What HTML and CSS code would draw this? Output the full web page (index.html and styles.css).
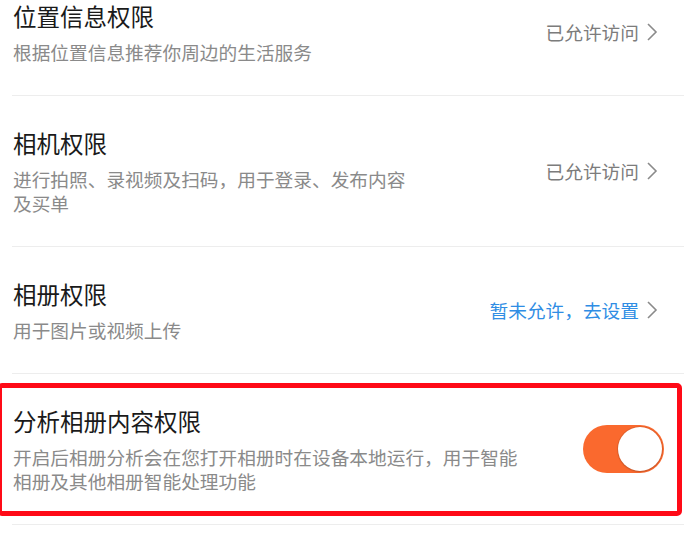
FILE: index.html
```html
<!DOCTYPE html>
<html lang="zh-CN">
<head>
    <meta charset="UTF-8">
    <meta name="viewport" content="width=device-width, initial-scale=1.0">
    <title>权限设置</title>
    <link rel="stylesheet" href="styles.css">
</head>
<body>

    <ul class="perm-list">
        <li class="perm-row">
            <div class="perm-text">
                <div class="perm-title">位置信息权限</div>
                <div class="perm-desc">根据位置信息推荐你周边的生活服务</div>
            </div>
            <a class="perm-state" href="#">
                已允许访问
                <svg class="chevron" width="12" height="20" viewBox="0 0 12 20"><polyline points="2,2 10,10 2,18"/></svg>
            </a>
        </li>
        <li class="perm-row">
            <div class="perm-text">
                <div class="perm-title">相机权限</div>
                <div class="perm-desc">进行拍照、录视频及扫码，用于登录、发布内容及买单</div>
            </div>
            <a class="perm-state" href="#">
                已允许访问
                <svg class="chevron" width="12" height="20" viewBox="0 0 12 20"><polyline points="2,2 10,10 2,18"/></svg>
            </a>
        </li>
        <li class="perm-row">
            <div class="perm-text">
                <div class="perm-title">相册权限</div>
                <div class="perm-desc">用于图片或视频上传</div>
            </div>
            <a class="perm-state denied" href="#">
                暂未允许，去设置
                <svg class="chevron" width="12" height="20" viewBox="0 0 12 20"><polyline points="2,2 10,10 2,18"/></svg>
            </a>
        </li>
        <li class="perm-row switch-row">
            <div class="perm-text">
                <div class="perm-title">分析相册内容权限</div>
                <div class="perm-desc">开启后相册分析会在您打开相册时在设备本地运行，用于智能相册及其他相册智能处理功能</div>
            </div>
            <span class="switch on"><span class="knob"></span></span>
            <div class="highlight"></div>
        </li>
    </ul>

</body>
</html>
```

FILE: styles.css
```css
/* pagina */
body {
    margin: 0;
    background: #ffffff;
    font-family: "Noto Sans CJK SC", "Noto Sans", sans-serif;
    color: #1c1c1c;
    overflow: hidden;
}
.perm-list {
    list-style: none;
    margin: 0;
    padding: 0 0 0 12px;
}
.perm-row {
    position: relative;
    display: flex;
    align-items: center;
    padding: 31px 26px 31px 1px;
    border-bottom: 1px solid #ededed;
}
.perm-row:first-child {
    padding-top: 0;
}
.perm-text {
    flex: 1;
}
.perm-title {
    font-size: 23.5px;
    line-height: 32px;
    color: #1a1a1a;
}
.perm-desc {
    margin-top: 8px;
    font-size: 18.7px;
    line-height: 24px;
    color: #8a8a8a;
    max-width: 410px;
}
.perm-state {
    display: flex;
    align-items: center;
    font-size: 18.7px;
    line-height: 24px;
    color: #7c7c7c;
    text-decoration: none;
    white-space: nowrap;
}
.perm-state.denied {
    color: #2f8de4;
}
.chevron {
    margin-left: 7px;
    fill: none;
    stroke: #8a8a8a;
    stroke-width: 1.6;
}
.switch-row {
    padding-right: 20px;
}
.switch-row .perm-desc {
    max-width: 520px;
}
.switch {
    position: relative;
    width: 81px;
    height: 48px;
    border-radius: 24px;
    background: #ccc;
}
.switch.on {
    background: #fa692e;
}
.knob {
    position: absolute;
    top: 2px;
    right: 2px;
    width: 44px;
    height: 44px;
    border-radius: 50%;
    background: #ffffff;
    box-shadow: 0 0 0 1px rgba(0, 0, 0, 0.08), 0 1px 2px rgba(0, 0, 0, 0.15);
}
/* riquadro rosso */
.highlight {
    position: absolute;
    top: 9px;
    bottom: 8px;
    left: -15px;
    right: 2px;
    border: 5px solid #ff0a17;
    border-radius: 5px;
}
```
